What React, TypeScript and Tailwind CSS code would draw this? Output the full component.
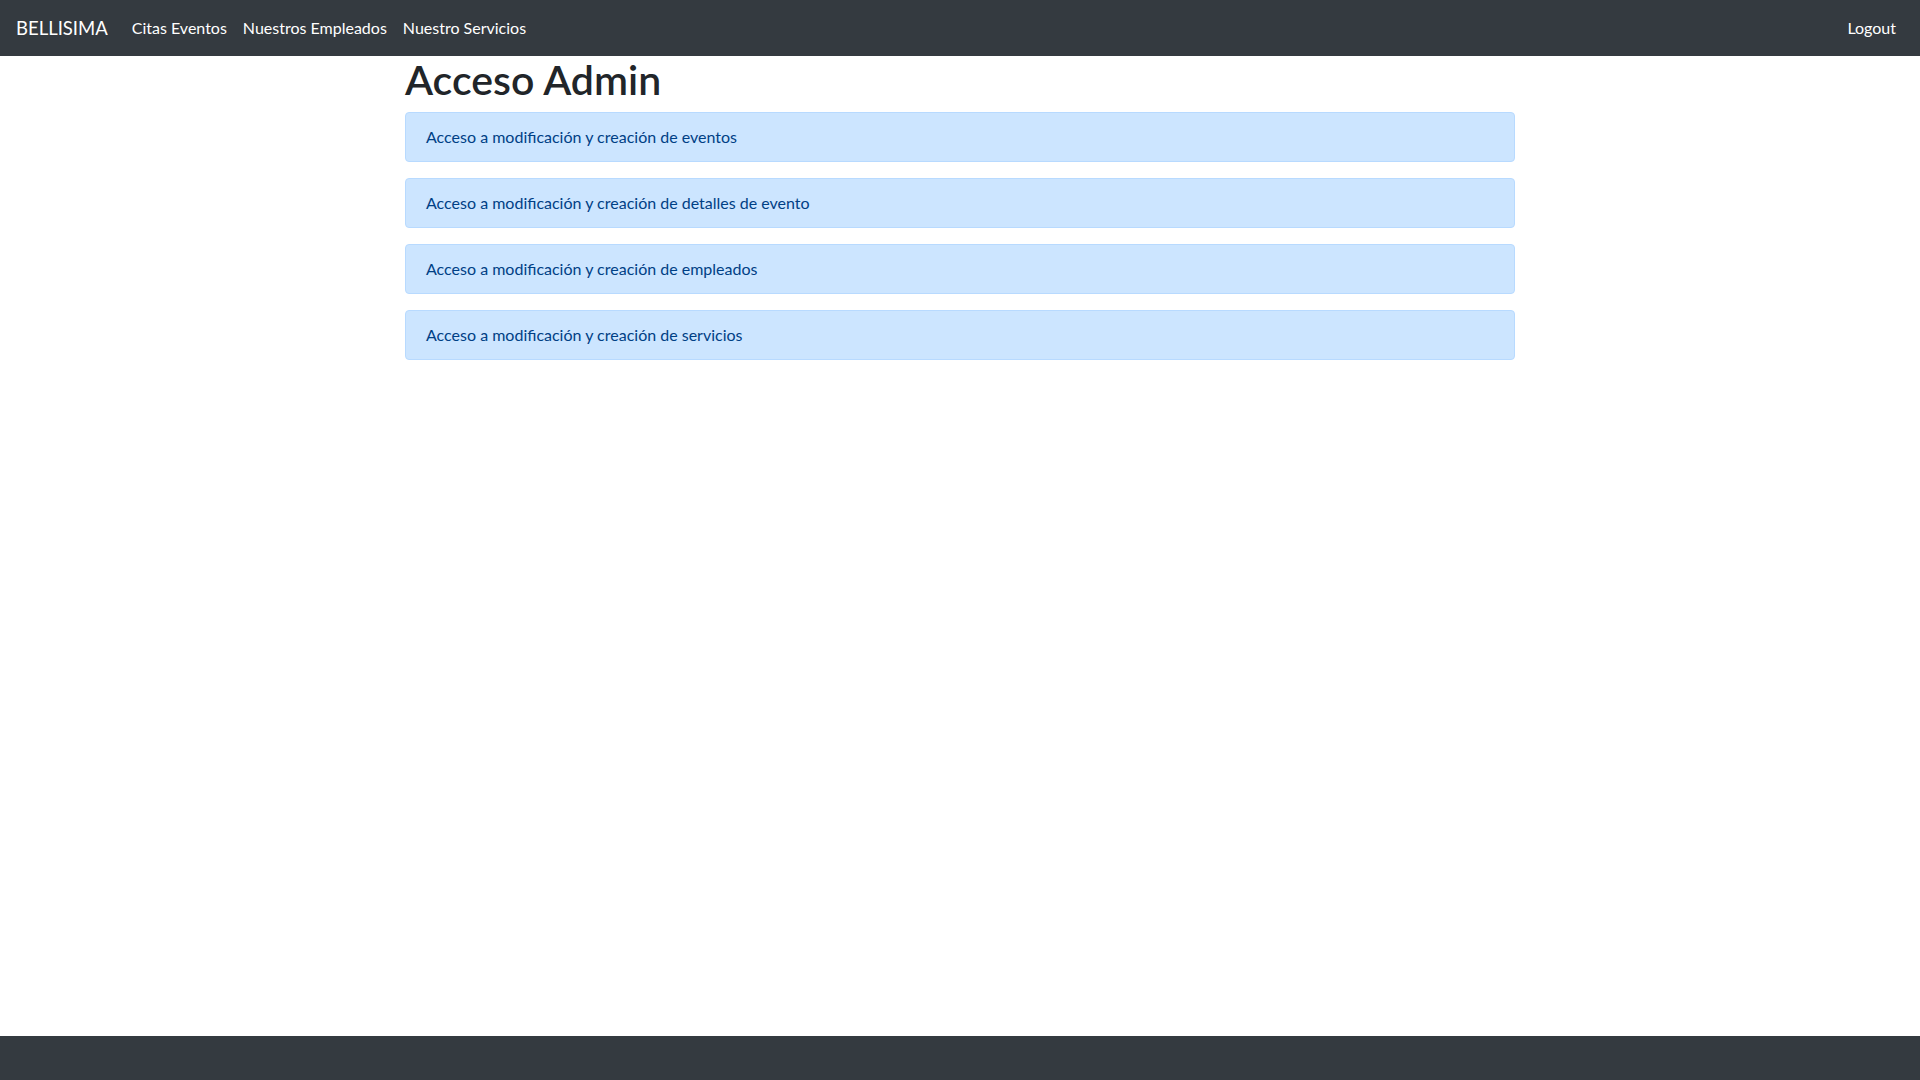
const links = ['Citas Eventos', 'Nuestros Empleados', 'Nuestro Servicios'];

const accesos = [
  'Acceso a modificación y creación de eventos',
  'Acceso a modificación y creación de detalles de evento',
  'Acceso a modificación y creación de empleados',
  'Acceso a modificación y creación de servicios',
];

export default function App() {
  return (
    <div className="flex min-h-screen flex-col bg-white text-[#212529] font-['Lato',sans-serif]">
      <nav className="flex h-[56px] items-center justify-between bg-[#343a40] px-4">
        <div className="flex items-center">
          <a className="mr-4 text-[18.5px] leading-[30px] text-white" href="#">BELLISIMA</a>
          {links.map((l) => (
            <a key={l} className="px-2 text-[16px] leading-6 text-white" href="#">{l}</a>
          ))}
        </div>
        <a className="px-2 text-[16px] leading-6 text-white" href="#">Logout</a>
      </nav>

      <main className="mx-auto w-[1140px] flex-1 px-[15px]">
        <h1 className="mb-2 text-[41px] font-semibold leading-[48px]">Acceso Admin</h1>
        {accesos.map((a) => (
          <div key={a} className="mb-4 rounded border border-[#b8daff] bg-[#cce5ff] px-5 py-3 text-[16px] leading-6 text-[#004085]">
            {a}
          </div>
        ))}
      </main>

      <footer className="h-[44px] bg-[#343a40]"></footer>
    </div>
  );
}
